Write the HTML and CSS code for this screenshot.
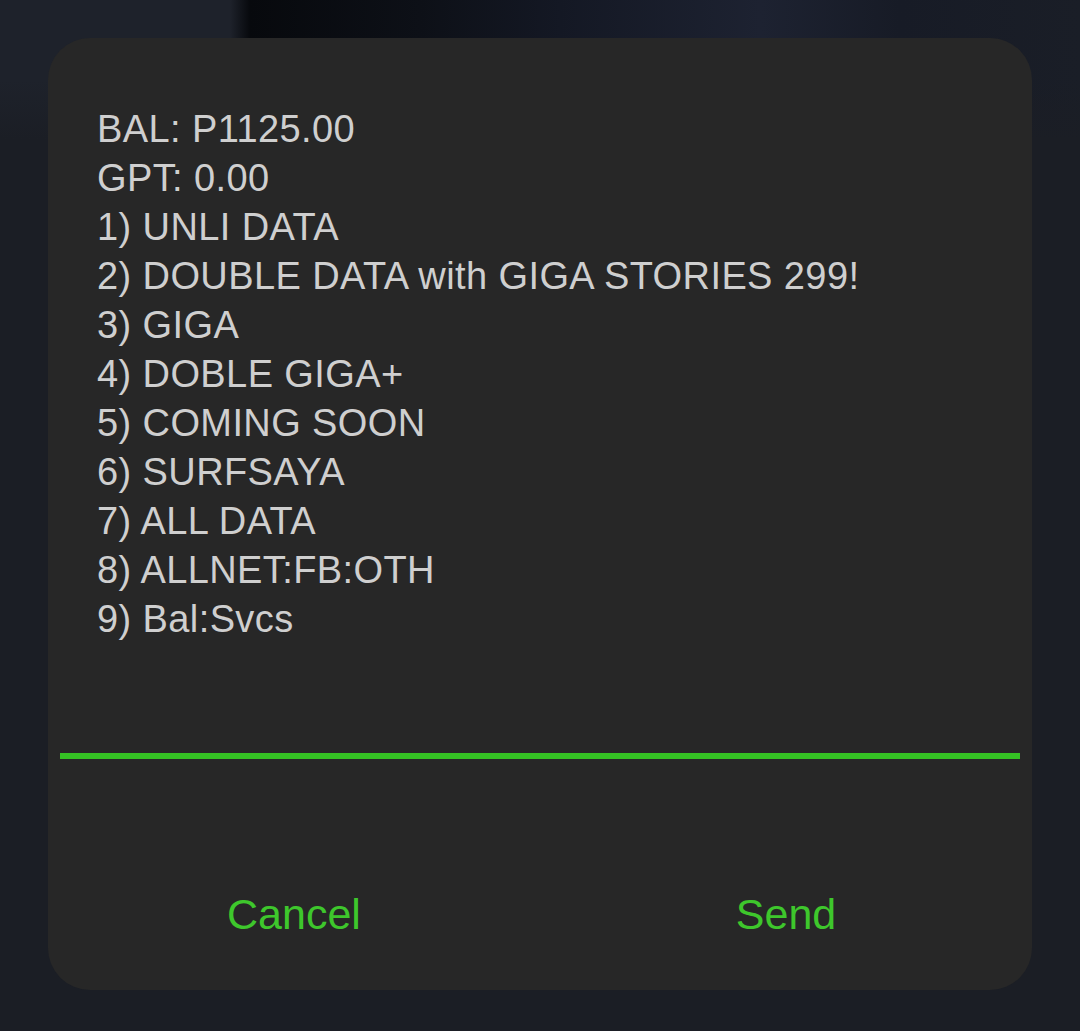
FILE: index.html
```html
<!DOCTYPE html>
<html>
<head>
<meta charset="utf-8">
<link rel="stylesheet" href="styles.css">
</head>
<body>
<div class="screen">
  <div class="dialog">
    <div class="message">
      <div class="line">BAL: P1125.00</div>
      <div class="line">GPT: 0.00</div>
      <div class="line">1) UNLI DATA</div>
      <div class="line">2) DOUBLE DATA with GIGA STORIES 299!</div>
      <div class="line">3) GIGA</div>
      <div class="line">4) DOBLE GIGA+</div>
      <div class="line">5) COMING SOON</div>
      <div class="line">6) SURFSAYA</div>
      <div class="line">7) ALL DATA</div>
      <div class="line">8) ALLNET:FB:OTH</div>
      <div class="line">9) Bal:Svcs</div>
    </div>
    <div class="input"></div>
    <div class="actions">
      <div class="btn">Cancel</div>
      <div class="btn">Send</div>
    </div>
  </div>
</div>
</body>
</html>
```
FILE: styles.css
```css
html, body {
  margin: 0;
  padding: 0;
}
body {
  width: 1080px;
  height: 1031px;
  overflow: hidden;
  background: #1b1e25;
  font-family: "Liberation Sans", Arial, sans-serif;
}
.screen {
  height: 1031px;
  box-sizing: border-box;
  padding: 38px 48px 0 48px;
  background:
    linear-gradient(180deg, rgba(27,30,37,0) 0px, rgba(27,30,37,0) 80px, #1b1e25 140px),
    linear-gradient(90deg, #1e222b 0px, #1e222b 230px, #07090d 250px, #0d1017 420px, #141824 560px, #1d2231 760px, #171b26 900px, #1a1e27 1080px);
}
.dialog {
  width: 984px;
  height: 952px;
  background: #272727;
  border-radius: 42px;
  display: flex;
  flex-direction: column;
}
.message {
  padding: 67px 0 0 49px;
  color: #cfcfcf;
  font-size: 38px;
  line-height: 49px;
  letter-spacing: 0.4px;
}
.input {
  margin: 109px 12px 0 12px;
  height: 6px;
  background: #35c224;
}
.actions {
  flex: 1;
  display: flex;
  align-items: center;
}
.btn {
  flex: 1;
  text-align: center;
  color: #3ec72c;
  font-size: 43px;
  padding-top: 80px;
}
```
